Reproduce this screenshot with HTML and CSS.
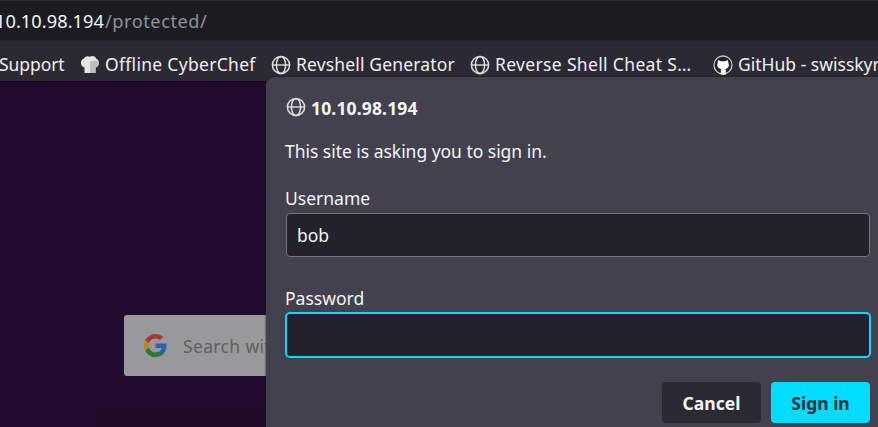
FILE: index.html
```html
<!DOCTYPE html>
<html lang="en">
<head>
<meta charset="utf-8">
<title>Sign in</title>
<link rel="stylesheet" href="styles.css">
</head>
<body>
<svg width="0" height="0" class="defs">
  <symbol id="globe" viewBox="0 0 20 20">
    <g fill="none" stroke="currentColor" stroke-width="1.5">
      <circle cx="10" cy="10" r="8.6"/><ellipse cx="10" cy="10" rx="4.6" ry="8.6"/><path d="M1.400 10h17.200" stroke-width="1.400"/>
    </g>
  </symbol>
</svg>
<div class="browser">
  <header class="urlbar"><span class="host">10.10.98.194</span><span class="path">/protected/</span></header>
  <nav class="bookmarks">
    <span class="bookmark support"><span class="label">Support</span></span>
    <span class="bookmark chef">
      <svg class="icon" viewBox="0 0 20 20"><path fill="#e6e6e6" d="M4.500 18v-5.500C0 12-.3 4.500 3.800 3.800 5 1 8 .7 10 1.700c2.500-1.200 5.500-.6 6.200 2.100 3.800.7 3.600 8.200-.7 8.700V18z"/><path fill="#bdbdbd" d="M10 6.500l6-1 2.800 1c.2 3-1 5.500-3.300 6V18H10z"/></svg>
      <span class="label">Offline CyberChef</span></span>
    <span class="bookmark revshell"><svg class="icon"><use href="#globe"/></svg><span class="label">Revshell Generator</span></span>
    <span class="bookmark reverse"><svg class="icon"><use href="#globe"/></svg><span class="label">Reverse Shell Cheat S…</span></span>
    <span class="bookmark github">
      <svg class="icon" viewBox="0 0 20 20"><circle cx="10" cy="10" r="9" fill="#24232b" stroke="#c9c9cd" stroke-width="1.300"/><path fill="#fff" d="M5.200 5l2.600 1.200h4.400L14.800 5l.5 2.500c1.500 3.500-.3 6-3 6.500.5.700.6 1.300.6 2V19.500H7.800v-3.500c0-.7.200-1.300.6-2-3.300-.5-5-3-3.700-6.500z"/></svg>
      <span class="label">GitHub - swisskyrepo</span></span>
  </nav>
  <main class="page">
    <div class="search">
      <svg class="google" viewBox="0 0 48 48"><path fill="#a93832" d="M24 9.500c3.540 0 6.710 1.220 9.210 3.600l6.850-6.850C35.900 2.380 30.470 0 24 0 14.620 0 6.510 5.380 2.560 13.220l7.980 6.190C12.430 13.720 17.740 9.500 24 9.500z"/><path fill="#315fae" d="M46.980 24.550c0-1.570-.15-3.090-.38-4.550H24v9.020h12.940c-.58 2.960-2.260 5.480-4.780 7.180l7.730 6c4.510-4.180 7.090-10.360 7.090-17.650z"/><path fill="#b38a12" d="M10.530 28.590c-.48-1.450-.76-2.990-.76-4.590s.27-3.140.76-4.590l-7.980-6.190C.92 16.460 0 20.120 0 24s.92 7.540 2.560 10.780z"/><path fill="#26783c" d="M24 48c6.480 0 11.930-2.130 15.890-5.810l-7.730-6c-2.150 1.450-4.920 2.300-8.160 2.300-6.260 0-11.570-4.220-13.470-9.910l-7.980 6.190C6.510 42.620 14.620 48 24 48z"/></svg>
      <span class="placeholder">Search with Google</span>
    </div>
    <div class="tiles"></div>
  </main>
  <form class="dialog">
    <div class="origin"><svg class="icon"><use href="#globe"/></svg><strong>10.10.98.194</strong></div>
    <div class="message"><span>This site is asking you to sign in.</span></div>
    <div class="name user">Username</div>
    <div class="field"><span>bob</span></div>
    <div class="name pass">Password</div>
    <div class="field focused"></div>
    <div class="actions"><span class="button cancel"><span>Cancel</span></span><span class="button primary"><span>Sign in</span></span></div>
  </form>
</div>
</body>
</html>
```
FILE: styles.css
```css
* { box-sizing: border-box; }
body { margin: 0; background: #210c30; font-family: "Noto Sans", "Open Sans", sans-serif; font-size: 17.5px; line-height: 24px; color: #f4f4f8; white-space: nowrap; }
.defs { display: block; }
.browser { position: relative; width: 878px; height: 427px; overflow: hidden; display: flex; flex-direction: column; }
.urlbar { flex: none; height: 41px; background: #1c1b22; border-top: 1px solid #2b2a33; border-bottom: 1px solid #25242c; padding-top: 8px; display: flex; font-size: 18.2px; }
.host { width: 110px; margin-left: -5px; letter-spacing: 0.06px; }
.path { color: #929198; letter-spacing: 0.54px; }
.bookmarks { flex: none; height: 41px; background: #2b2a33; border-bottom: 1px solid #111015; display: flex; padding-top: 11px; }
.bookmark { display: flex; flex: none; gap: 5px; color: #eeeef3; }
.icon { width: 20px; height: 20px; flex: none; margin-top: 2.5px; color: #dedee3; }
.support { width: 81px; margin-left: -1px; letter-spacing: -0.08px; }
.chef { width: 191px; letter-spacing: 0.3px; }
.revshell { width: 199px; letter-spacing: 0.15px; }
.reverse { width: 243px; letter-spacing: 0.34px; }
.page { flex: none; height: 345px; padding: 233px 0 0 98px; display: flex; flex-direction: column; }
.search { height: 61px; flex: none; width: 500px; margin-left: 26px; padding: 0 20px; display: flex; align-items: center; gap: 16px; background: #99989a; border-radius: 3px; color: #606066; }
.placeholder { letter-spacing: 0.35px; }
.google { width: 23px; height: 23px; }
.tiles { flex: none; width: 600px; height: 60px; margin-top: 31px; background: #1e0c29; border-radius: 4px; }
.dialog { position: absolute; left: 266px; top: 77px; width: 640px; height: 380px; padding: 19px 36px 0 19px; margin: 0; border-radius: 8px; background: #42414d; box-shadow: 0 0 2px #15141a; display: flex; flex-direction: column; }
.origin { display: flex; gap: 5px; height: 24px; margin-left: 1px; letter-spacing: 0.15px; }
.dialog .origin .icon { margin-top: 1px; }
.message { margin-top: 19px; height: 25px; letter-spacing: -0.03px; }
.name { height: 24px; }
.user { margin-top: 22px; }
.field { height: 44px; width: 584px; margin: 3px 0 0 1px; padding: 9px 10px; border: 1px solid #76757f; border-radius: 4px; background: #23222b; }
.pass { margin-top: 29px; }
.field.focused { height: 46px; width: 586px; margin: 2px 0 0 0; border: 2px solid #00ddff; border-radius: 5px; }
.actions { display: flex; gap: 10px; margin: 24px 0 0 377px; font-weight: 700; }
.button { width: 99px; height: 41px; border-radius: 4px; background: #2b2a33; display: flex; align-items: center; justify-content: center; }
.primary { background: #00ddff; color: #26343f; }
```
